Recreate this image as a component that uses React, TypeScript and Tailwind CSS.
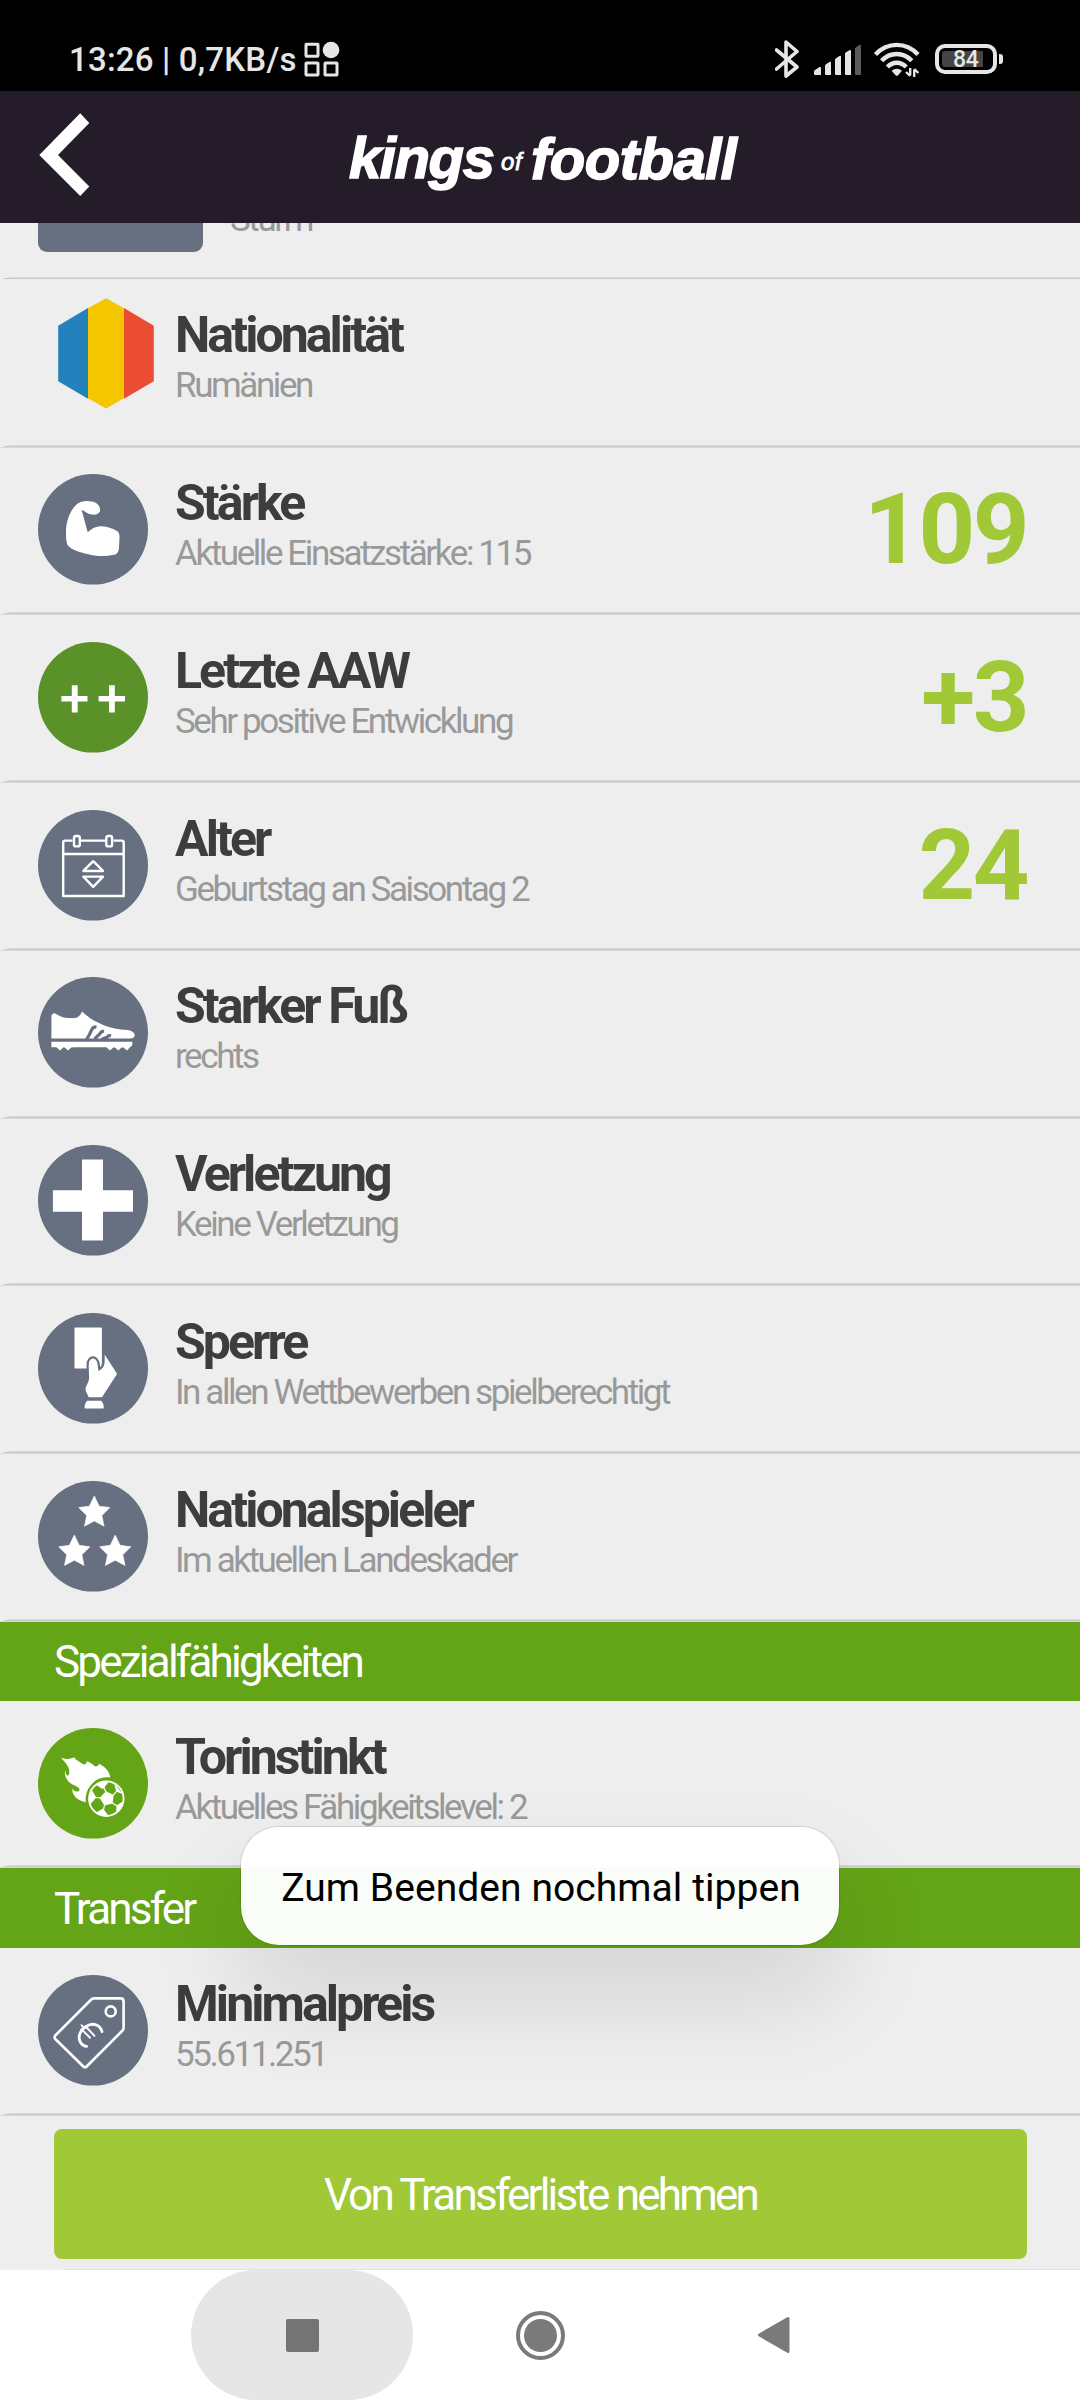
import React from "react";

const SLATE = "#677080";

function StatusBar() {
  return (
    <div className="flex h-[91px] shrink-0 items-start bg-black pr-[77px] pl-[69px] text-[#e6e6e6]">
      <div className="mt-[43px] text-[33px] leading-[34px] font-medium tracking-[0.19px] whitespace-pre">
        13:26 | 0,7KB/s
      </div>
      <svg className="mt-[41px] ml-[7px] h-9 w-9" viewBox="0 0 36 36" fill="none" stroke="#e6e6e6" strokeWidth="3">
        <rect x="2" y="3.3" width="12" height="12" rx="0.5" />
        <rect x="2" y="22" width="12" height="12" rx="0.5" />
        <rect x="21" y="22" width="12" height="12" rx="0.5" />
        <circle cx="27" cy="9" r="8.3" fill="#e6e6e6" stroke="none" />
      </svg>
      <div className="flex-1" />
      {/* Bluetooth */}
      <svg className="mt-[39px] h-10 w-[26px]" viewBox="0 0 26 40" fill="none" stroke="#e6e6e6" strokeWidth="3.6" strokeLinecap="round" strokeLinejoin="round">
        <path d="M1.5 11 L22 28 L11 37 V3 L22 12.5 L1.5 30" />
      </svg>
      {/* Mobile signal */}
      <svg className="mt-[44px] ml-[12px] h-8 w-[50px]" viewBox="0 0 50 32" fill="#e6e6e6">
        <path d="M1 27.5 Q1 26.6 2 26 L6.5 23 Q8 22.5 8 24 V31 H2 Q1 31 1 30z" />
        <path d="M12 22 Q12 21 13 20.2 L16.4 18 Q18 17.2 18 19 V31 H13 Q12 31 12 30z" />
        <path d="M22 16 Q22 15 23 14.2 L26.4 12 Q28 11.2 28 13 V31 H23 Q22 31 22 30z" />
        <path d="M32 10 Q32 9 33 8.2 L36.4 6.3 Q38 5.5 38 7 V31 H33 Q32 31 32 30z" />
        <path fill="#5a5a5a" d="M42 5 Q42 4 43 3.2 L46.4 1 Q48 0.2 48 2 V31 H43 Q42 31 42 30z" />
      </svg>
      {/* Wi-Fi */}
      <svg className="mt-[41px] ml-[10px] h-[38px] w-12" viewBox="0 0 48 38" fill="none" stroke="#e6e6e6" strokeWidth="4.4">
        <path d="M2.5 13.5 Q11.5 3.9 23.8 3.9 Q36 3.9 45 13.5" />
        <path d="M8.6 19.8 Q15 13 23.8 13 Q32.5 13 38.8 19.8" />
        <path d="M14.4 26 Q18.5 21.7 23.8 21.7 Q29 21.7 33.2 26" />
        <path stroke="none" fill="#e6e6e6" d="M18.6 29.8 Q23.8 25.6 29 29.8 L24.8 34.6 Q23.8 35.4 22.8 34.6z" />
        <path strokeWidth="2.4" d="M37.2 27 V34.5 M33 31 L37.2 35 M41.2 36 V28.5 M45.4 32 L41.2 28" />
      </svg>
      {/* Battery */}
      <div className="mt-[44px] ml-[14px] flex h-[30px] w-[62px] items-center rounded-[10px] border-4 border-[#e6e6e6] pl-[3px]">
        <div className="flex h-4 w-[41px] items-center rounded-l-[3px] bg-[#444] pl-[11px]">
          <span className="mt-[1px] text-[23px] leading-[16px] font-medium tracking-[-0.3px]">84</span>
        </div>
      </div>
      <div className="mt-[54px] ml-[2px] h-[10px] w-[4px] rounded-r-[3px] bg-[#e6e6e6]" />
    </div>
  );
}

function AppHeader() {
  return (
    <div className="flex h-[132px] shrink-0 items-start bg-[#241c29] pl-[39px] text-white">
      <svg className="mt-[22px] h-[84px] w-[51px]" viewBox="0 0 51 84" fill="#fff">
        <path d="M41.2 0.3 L50.3 10 L19 42 L50.3 73.5 L41.2 83 L0.3 42z" />
      </svg>
      <div className="ml-[259px] flex items-start font-['Liberation_Sans',Arial,sans-serif] italic">
        <span className="mt-[34px] w-[152px] text-[58px] leading-[66px] font-bold tracking-[-1.4px] [-webkit-text-stroke:1.6px_#fff]">kings</span>
        <span className="mt-[57px] w-[30px] text-[24px] leading-[28px] tracking-[0.6px] [-webkit-text-stroke:0.8px_#fff]">of</span>
        <span className="mt-[35px] text-[58px] leading-[66px] font-bold tracking-[-0.5px] [-webkit-text-stroke:1.6px_#fff]">football</span>
      </div>
    </div>
  );
}

function Divider({ last = true }: { last?: boolean }) {
  return (
    <div className="flex shrink-0 flex-col">
      <div className="ml-[9px] h-px bg-[#d9d9d9]" />
      <div className="ml-[4px] h-px bg-[#c8c8c8]" />
      <div className={last ? "h-px bg-[#dadada]" : "h-px"} />
    </div>
  );
}

function Disc({ color = SLATE, children }: { color?: string; children: React.ReactNode }) {
  return (
    <svg className="h-[110.6px] w-[110px]" viewBox="0 0 110 110" preserveAspectRatio="none" fill="#fff">
      <circle cx="55" cy="55" r="55" fill={color} />
      {children}
    </svg>
  );
}

function Flag() {
  return (
    <svg className="-mt-[8px] ml-[20px] h-[110.6px] w-[96px] shrink-0" viewBox="0 0 96 110" preserveAspectRatio="none">
      <path fill="#2381bc" d="M0.2 27.7 L30 10 V100.3 L0.2 82.7z" />
      <path fill="#f3c600" d="M30 10.2 L48 0.2 L66 10.2 V99.8 L48 109.8 L30 99.8z" />
      <path fill="#ea4d34" d="M66 10 L95.8 27.7 V82.7 L66 100.3z" />
    </svg>
  );
}

function Arm() {
  return (
    <Disc>
      <path d="M37.7 31 C41 27.5 46 26.6 51.3 27 C57 27 62.3 30 62.1 36 C61.8 39.6 58 40.6 54 40.4 C50 40.2 47.5 37.4 43.6 35.6 L49.7 58 C54 53.6 59 51.6 63.8 52 C70 52.4 75 54.6 79 56.6 C81 57.8 81.5 60 81.5 63 L81 73 C80.8 77 79.5 79.5 76 80.2 C68 82.2 58 82.2 49.5 79.6 C41.5 77.6 34 75.5 29.8 71 C28 68 28 62 28 57 C28 50 30 43.5 32 39.5 C33.6 36 35.5 33.2 37.7 31z" />
    </Disc>
  );
}

function DoublePlus() {
  return (
    <Disc color="#5a9129">
      <path d="M33.8 43 H39.7 V53.7 H49.5 V59.2 H39.7 V70 H33.8 V59.2 H23.4 V53.7 H33.8z" />
      <path d="M71 43 H76.8 V53.7 H87 V59.2 H76.8 V70 H71 V59.2 H60.6 V53.7 H71z" />
    </Disc>
  );
}

function Calendar() {
  return (
    <Disc>
      <g fill="none" stroke="#fff" strokeWidth="2.4" strokeLinejoin="round">
        <path d="M34.5 30.5 H27 Q25.2 30.5 25.2 32.3 V85.6 H85.7 V32.3 Q85.7 30.5 83.9 30.5 H75.5 M42.6 30.5 H67" />
        <path d="M25.2 43.7 H85.7" />
        <rect x="36" y="25.8" width="5.8" height="10.4" rx="2" />
        <rect x="68.3" y="25.8" width="5.8" height="10.4" rx="2" />
        <path d="M55.2 50.9 L65 60.6 H45.4z M45.4 66.3 H65 L55.2 76.4z" />
      </g>
    </Disc>
  );
}

function Shoe() {
  return (
    <Disc>
      <path d="M13.4 61.2 V39.5 Q13.6 36 16.6 36 C20 37.8 24 40.6 30 40.9 C34 41 38.5 41.4 40.2 39.6 Q42.6 37.6 44.1 34.2 C49 39 54 42.5 60.5 45.6 C66 48.5 75 51.6 83 52.3 C88 53 91.5 52.6 94 54.2 C98.4 56.6 97 61.2 92.5 61.2z" />
      <g fill="none" stroke={SLATE} strokeWidth="3.2">
        <path d="M58.5 49.6 Q54.8 49.4 53.4 53 Q51 58.6 48.5 62" />
        <path d="M66 54.2 Q63 53.8 61.5 57 L56.5 61.5" />
        <path d="M73 58.6 Q70.5 57.6 69 60 L63.5 62" />
      </g>
      <path d="M13.4 64.3 H94.4 V67 Q94.2 69 92.2 69.6 L89 73.2 L85.5 70.2 L83.5 70.2 L80.4 73.2 L77 70.2 L75.2 70.2 L72 73.2 L68.5 69.8 H37 L33.2 70.2 L30 73.2 L26.6 70.2 H25 L22 73.2 L18.5 69.8 H13.4z" />
    </Disc>
  );
}

function Cross() {
  return (
    <Disc>
      <path d="M44 14.3 H65 V45 H95 V66.3 H65 V95 H44 V66.3 H14.9 V45 H44z" />
    </Disc>
  );
}

function CardHand() {
  return (
    <Disc>
      <rect x="36.5" y="14.3" width="27.4" height="41" rx="1.2" />
      <path
        stroke={SLATE}
        strokeWidth="2.2"
        d="M50 84.8 C48.5 81 46 79 46.4 75 C47 71 50 69 50 65 L49.6 52 C49.2 41.5 60.5 41.5 60.8 52 L61.4 56 C65.5 54 65.6 50 65.6 46 V37.8 L80.4 60.5 L64.6 84.8z"
      />
      <path d="M49 87.2 H63.4 Q66.4 91 65.6 95 H46.8 Q46 91 49 87.2z" />
    </Disc>
  );
}

const STAR = "M0 -16 L4.9 -5.8 L15.6 -4.4 L7.6 3.6 L9.8 14.2 L0 9 L-9.8 14.2 L-7.6 3.6 L-15.6 -4.4 L-4.9 -5.8z";

function Stars() {
  return (
    <Disc>
      <g stroke="#fff" strokeWidth="0.6" strokeLinejoin="round">
        <path transform="translate(56.3 30.8)" d={STAR} />
        <path transform="translate(36.3 69.8)" d={STAR} />
        <path transform="translate(77.2 69.8)" d={STAR} />
      </g>
    </Disc>
  );
}

function FireBall() {
  return (
    <Disc color="#64a417">
      <path d="M23 29.7 C27 31.5 32 31 36.3 29 C37 31.5 42 33.5 45.8 36.4 C48 36 48.6 34.8 48.8 33 C51.5 34 54.5 35.4 57 38.4 C59.5 38 60.6 37.4 61 35.6 C66 38 71.5 42.5 72.3 49.3 C66 48.4 60 50 56 53.6 C50 58.6 47 65.5 47.8 74 C43.5 72.6 39 71.5 36.6 67.4 C34.6 65 34 62.5 34.7 60.2 C35.5 63 40 64.5 41.4 61.6 C42 58.5 37 57.8 33.7 55.6 C29 53 25.6 47.5 27.6 41.6 C27.4 45 28.3 47.4 29.8 47.4 C32 46 31.6 41.6 30 38.6 C28.5 35.5 25.5 32.5 23 29.7z" />
      <circle cx="68.3" cy="70.3" r="18.2" />
      <circle cx="68.3" cy="70.3" r="16.4" fill="#64a417" />
      <path d="M68 63 L75.6 66.6 L74.6 75 L66.4 77 L61.6 69.6z" />
      <g stroke="#fff" strokeWidth="1.2">
        <path d="M68 64 L64.6 56 M75 67 L80.5 60.5 M74 74.4 L81.5 79 M66.6 76 L64.8 85 M62.5 69.6 L53 68.5" />
      </g>
      <path d="M58 56.4 Q63 53 70.6 53.6 L64.8 61z M76 55 L84.8 65.6 L78.4 63.4z M85.4 72.5 Q84.6 79.6 78 84.2 L78.6 77z M70.5 87.4 Q64 87.4 58.4 84 L65 80z M52 76.4 Q50.6 68.6 54 61.6 L58.2 69.2z" />
    </Disc>
  );
}

function PriceTag() {
  return (
    <Disc>
      <g fill="none" stroke="#fff" strokeWidth="2.6" strokeLinejoin="round" strokeLinecap="round">
        <path d="M56 23.3 H82.5 Q85.6 23.3 85.6 26.4 V52.5 Q85.6 54 84.6 55.2 L48.6 91 Q47 92.6 45.4 91 L17.3 63.6 Q15.8 62 17.3 60.2 L53 24.6 Q54.3 23.3 56 23.3z" />
        <circle cx="72.7" cy="36.2" r="5" />
        <path strokeWidth="2.8" d="M64 56.4 C62.5 50 55.5 47 49.5 50.5 C43 54 39.4 60 42 66 C43.2 69 45.5 70.6 48.6 71" />
        <path strokeWidth="1.9" d="M43.4 53.8 L52 62.4 M47.5 51 L56.5 60.6 M43.5 50 L46 52.5" />
      </g>
    </Disc>
  );
}

type RowProps = {
  icon: React.ReactNode;
  title: string;
  detail: string;
  value?: string;
  compact?: boolean;
  low?: boolean;
};

function InfoRow({ icon, title, detail, value, compact = false, low = false }: RowProps) {
  return (
    <div className={compact ? "flex h-[167px] shrink-0 flex-col" : "flex h-[168px] shrink-0 flex-col"}>
      <div className={low ? "flex min-h-0 flex-1 items-start pt-[27px] pr-[53px] pl-[38px]" : "flex min-h-0 flex-1 items-start pt-[26px] pr-[53px] pl-[38px]"}>
        <div className="flex w-[110px] shrink-0">{icon}</div>
        <div className="mt-[4px] ml-[27px] flex flex-1 flex-col gap-[9px] whitespace-nowrap">
          <div className="text-[50px] leading-[50px] font-bold tracking-[-2.94px] text-[#3c3d3f]">{title}</div>
          <div className="text-[35px] leading-[34px] tracking-[-2.42px] text-[#999999]">{detail}</div>
        </div>
        {value && (
          <div className="mt-[6px] text-[99px] leading-[99px] font-bold tracking-[-2.5px] text-[#a0c837]">{value}</div>
        )}
      </div>
      <Divider />
    </div>
  );
}

function SectionHeader({ label, tall = false }: { label: string; tall?: boolean }) {
  return (
    <div className={tall ? "flex h-[80px] shrink-0 items-center bg-[#64a417] pt-[2px] pl-[54px]" : "flex h-[79px] shrink-0 items-center bg-[#64a417] pl-[54px]"}>
      <span className="text-[44px] leading-[52px] tracking-[-2.78px] text-white">{label}</span>
    </div>
  );
}

function Toast() {
  return (
    <div className="absolute top-[1827px] left-[241px] flex h-[118px] w-[598px] items-center justify-center rounded-[38px] bg-white/97 pt-[3px] pl-[2px] shadow-[0_50px_98px_rgba(0,0,0,0.115),0_0_1px_1px_rgba(0,0,0,0.12)]">
      <span className="text-[39px] leading-[44px] tracking-[0.06px] whitespace-nowrap text-black">Zum Beenden nochmal tippen</span>
    </div>
  );
}

function NavBar() {
  return (
    <div className="flex h-[130px] shrink-0 items-center bg-white pl-[191px]">
      <div className="flex h-[130px] w-[222px] items-center justify-center rounded-full bg-[#e6e6e6]">
        <div className="h-[33px] w-[33px] rounded-[2px] bg-[#747474]" />
      </div>
      <div className="ml-[103px] flex h-[49px] w-[49px] items-center justify-center rounded-full border-4 border-[#7a7a7a]">
        <div className="h-[33px] w-[33px] rounded-full bg-[#7a7a7a]" />
      </div>
      <svg className="ml-[192px] h-[38px] w-[34px]" viewBox="0 0 34 38" fill="#7a7a7a" stroke="#7a7a7a" strokeWidth="3" strokeLinejoin="round">
        <path d="M2.5 19 L31 2.5 V35.5z" />
      </svg>
    </div>
  );
}

export default function App() {
  return (
    <div className="relative flex h-[2400px] w-[1080px] flex-col overflow-hidden bg-[#eeeeee] font-[Roboto,sans-serif]">
      <StatusBar />
      <AppHeader />
      <div className="flex h-[57px] shrink-0 flex-col overflow-hidden">
        <div className="flex h-[54px] items-end pl-[38px]">
          <div className="mb-[25px] h-[110px] w-[165px] rounded-[9px] bg-[#677080]" />
          <div className="mb-[40px] ml-[27px] text-[35px] leading-[34px] tracking-[-2.42px] text-[#999999]">Sturm</div>
        </div>
        <Divider last={false} />
      </div>
      <InfoRow icon={<Flag />} title="Nationalität" detail="Rumänien" />
      <InfoRow icon={<Arm />} title="Stärke" detail="Aktuelle Einsatzstärke: 115" value="109" compact />
      <InfoRow icon={<DoublePlus />} title="Letzte AAW" detail="Sehr positive Entwicklung" value="+3" low />
      <InfoRow icon={<Calendar />} title="Alter" detail="Geburtstag an Saisontag 2" value="24" low />
      <InfoRow icon={<Shoe />} title="Starker Fuß" detail="rechts" />
      <InfoRow icon={<Cross />} title="Verletzung" detail="Keine Verletzung" compact />
      <InfoRow icon={<CardHand />} title="Sperre" detail="In allen Wettbewerben spielberechtigt" low />
      <InfoRow icon={<Stars />} title="Nationalspieler" detail="Im aktuellen Landeskader" low />
      <SectionHeader label="Spezialfähigkeiten" />
      <InfoRow icon={<FireBall />} title="Torinstinkt" detail="Aktuelles Fähigkeitslevel: 2" low compact />
      <SectionHeader label="Transfer" tall />
      <InfoRow icon={<PriceTag />} title="Minimalpreis" detail="55.611.251" low />
      <div className="flex min-h-0 flex-1 flex-col pt-[13px] pr-[53px] pl-[54px]">
        <button className="flex h-[130px] shrink-0 items-center justify-center rounded-[8px] bg-[#a0c837] pt-[2px] text-[44px] leading-[52px] tracking-[-2.78px] text-white">
          Von Transferliste nehmen
        </button>
        <div className="mt-auto -mr-[53px] ml-[12px] h-px bg-[#e2e2e2]" />
      </div>
      <NavBar />
      <Toast />
    </div>
  );
}
